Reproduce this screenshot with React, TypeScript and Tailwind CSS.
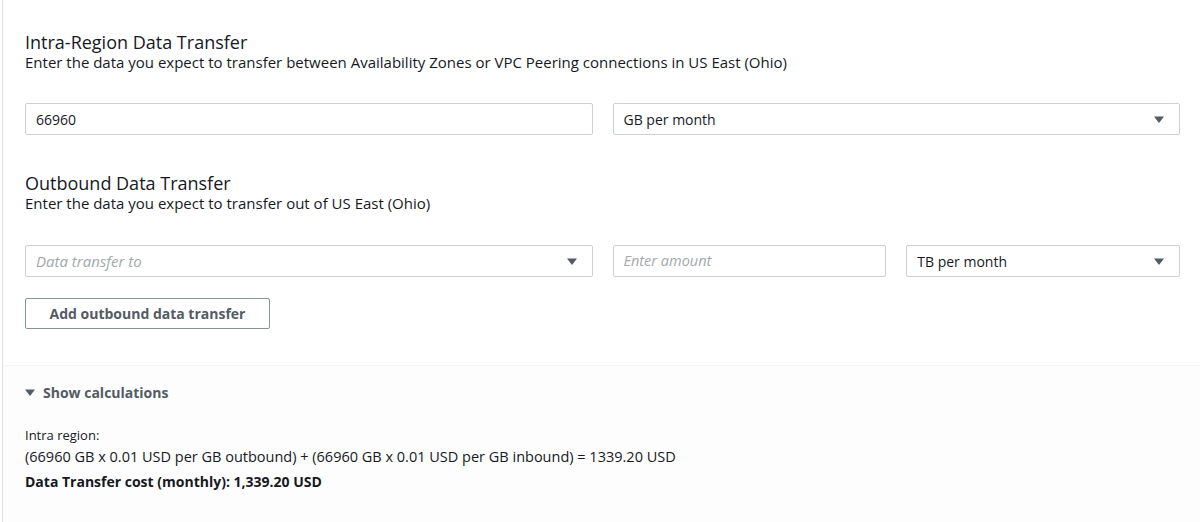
const Caret = ({ className = "" }: { className?: string }) => (
    <svg viewBox="0 0 10 7" className={`w-[10px] h-[7px] ${className}`} fill="#545b64">
        <path d="M0 0.5 L10 0.5 L5 7 Z" />
    </svg>
);

const Select = ({ value, placeholder }: { value?: string; placeholder?: string }) => (
    <div className="h-[32px] flex items-center justify-between pl-[10px] pr-[15px] border border-[#ccd2d2] rounded-[2px] bg-white">
        {value ? (
            <span className="text-[14px] text-[#16191f]">{value}</span>
        ) : (
            <span className="text-[15px] italic text-[#9fa9aa]">{placeholder}</span>
        )}
        <Caret />
    </div>
);

const Input = ({ value, placeholder }: { value?: string; placeholder?: string }) => (
    <div className="h-[32px] flex items-center pl-[10px] border border-[#ccd2d2] rounded-[2px] bg-white">
        {value ? (
            <span className="text-[14px] text-[#16191f]">{value}</span>
        ) : (
            <span className="text-[14.5px] italic text-[#9fa9aa]">{placeholder}</span>
        )}
    </div>
);

export default function App() {
    return (
        <div
            className="w-[1200px] h-[522px] bg-white overflow-hidden"
            style={{ fontFamily: '"Open Sans", "Liberation Sans", sans-serif' }}
        >
            <div className="ml-[2px] h-full border-l border-[#dfe3e3] flex flex-col">
                <div className="pl-[22px] pr-[20px] pt-[31px]">
                    <h2 className="text-[18px] leading-[22px] text-[#16191f]">Intra-Region Data Transfer</h2>
                    <p className="-mt-[1px] text-[15px] leading-[20px] text-[#16191f]">
                        Enter the data you expect to transfer between Availability Zones or VPC Peering connections in US East (Ohio)
                    </p>
                    <div className="mt-[31px] grid grid-cols-2 gap-[20px]">
                        <Input value="66960" />
                        <Select value="GB per month" />
                    </div>

                    <h2 className="mt-[37px] text-[18px] leading-[22px] text-[#16191f]">Outbound Data Transfer</h2>
                    <p className="-mt-[1px] text-[15px] leading-[20px] text-[#16191f]">
                        Enter the data you expect to transfer out of US East (Ohio)
                    </p>
                    <div className="mt-[32px] grid grid-cols-2 gap-[20px]">
                        <Select placeholder="Data transfer to" />
                        <div className="grid grid-cols-2 gap-[20px]">
                            <Input placeholder="Enter amount" />
                            <Select value="TB per month" />
                        </div>
                    </div>
                    <button className="mt-[21px] h-[31px] w-[245px] border border-[#879596] rounded-[2px] bg-white text-[14px] font-bold text-[#545b64]">
                        Add outbound data transfer
                    </button>
                </div>

                <div className="mt-[36px] border-t border-[#f2f3f3] flex-1 bg-[#fdfdfd] pl-[22px] pt-[16px]">
                    <div className="flex items-center gap-[8px] h-[20px]">
                        <Caret className="w-[9px] h-[7px]" />
                        <span className="text-[14px] font-bold text-[#545b64]">Show calculations</span>
                    </div>
                    <p className="mt-[23px] text-[13px] leading-[20px] text-[#16191f]">Intra region:</p>
                    <p className="mt-[2px] text-[14.5px] leading-[20px] text-[#16191f]">
                        (66960 GB x 0.01 USD per GB outbound) + (66960 GB x 0.01 USD per GB inbound) = 1339.20 USD
                    </p>
                    <p className="mt-[5px] text-[14px] leading-[20px] font-bold text-[#16191f]">
                        Data Transfer cost (monthly): 1,339.20 USD
                    </p>
                </div>
            </div>
        </div>
    );
}
